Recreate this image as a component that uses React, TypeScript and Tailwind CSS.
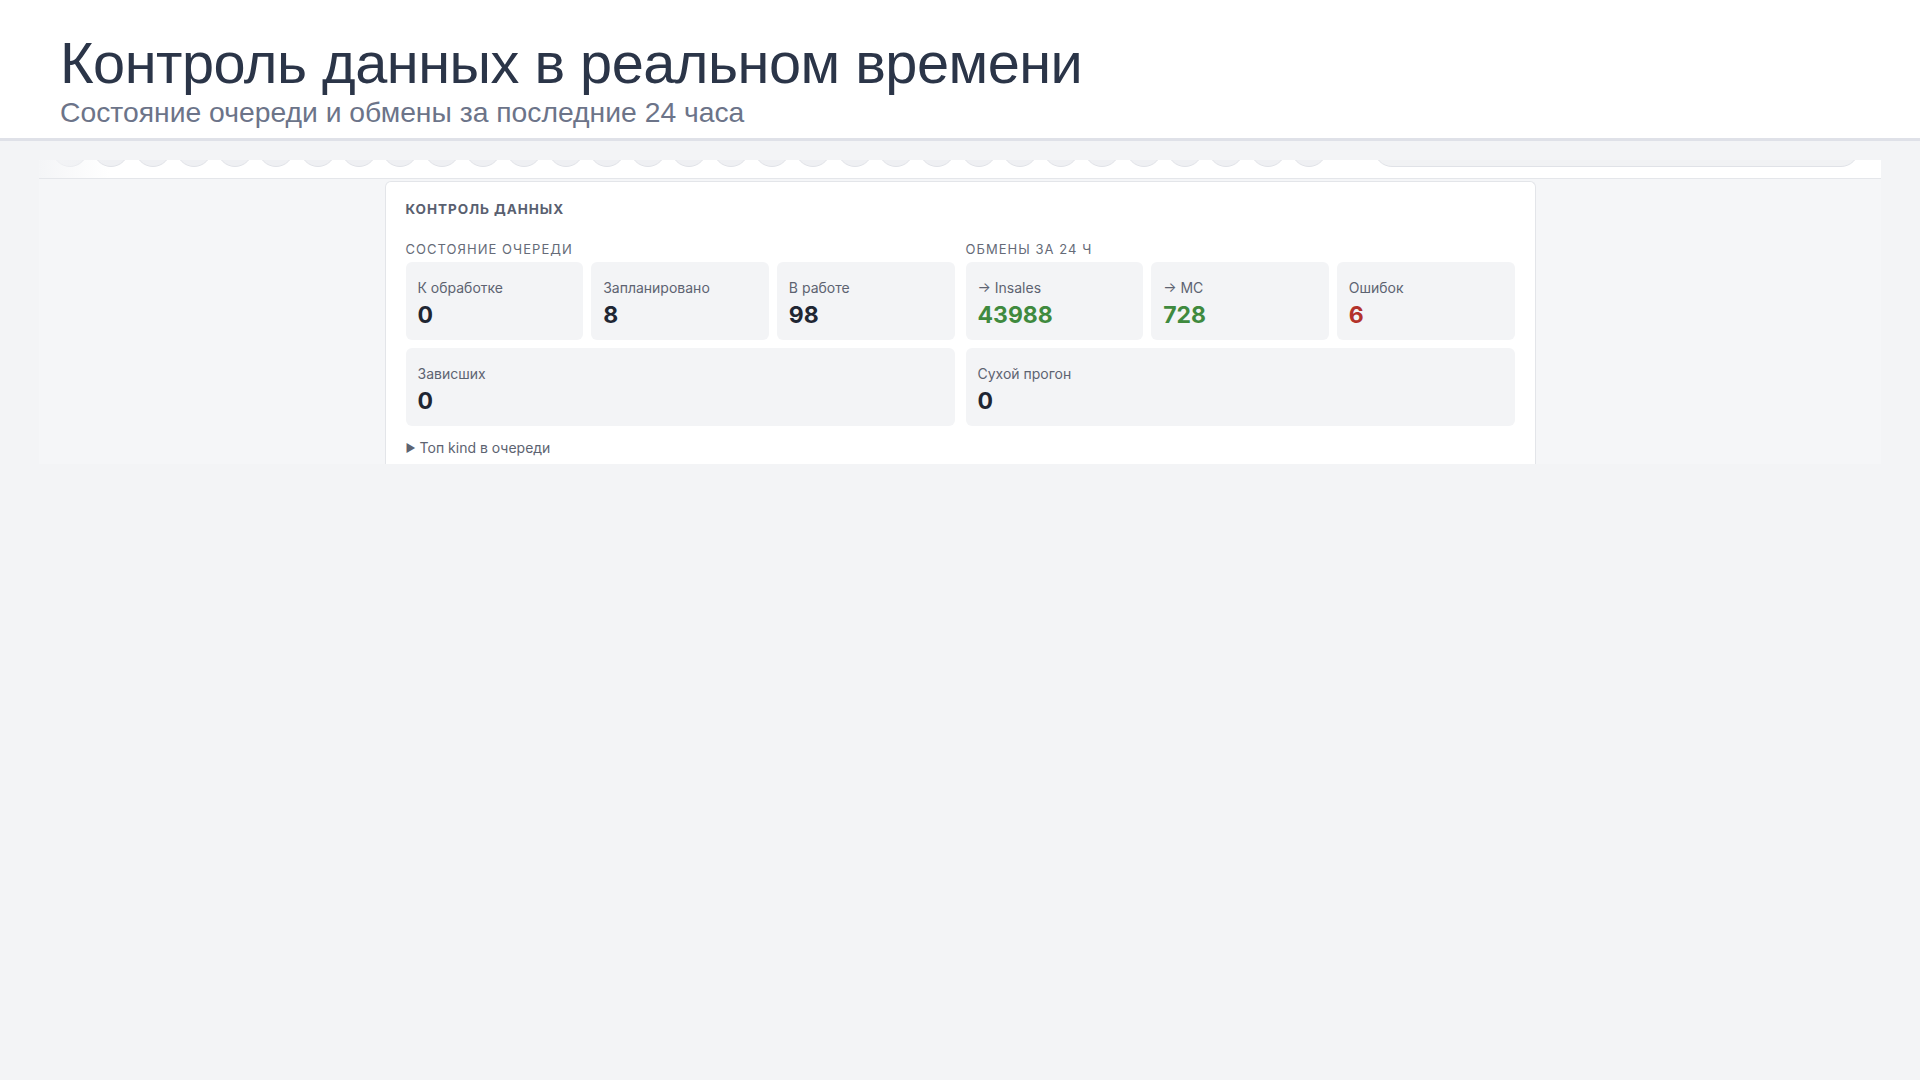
import React from 'react';

const queue = [
  { label: 'К обработке', value: '0' },
  { label: 'Запланировано', value: '8' },
  { label: 'В работе', value: '98' },
];

const exchanges = [
  { label: '→ Insales', value: '43988', tone: 'text-[#3f8a3e]' },
  { label: '→ МС', value: '728', tone: 'text-[#3f8a3e]' },
  { label: 'Ошибок', value: '6', tone: 'text-[#b3322b]' },
];

function Tile({ label, value, tone = 'text-[#1f2633]', wide = false }: { label: string; value: string; tone?: string; wide?: boolean }) {
  return (
    <div className={`rounded-md bg-[#f3f4f6] h-[78px] px-3 pt-4 ${wide ? 'col-span-3' : ''}`}>
      <div className="text-[14px] leading-5 text-[#5d6371]">{label}</div>
      <div className={`mt-0.5 text-[23px] leading-[30px] font-bold ${tone}`}>{value}</div>
    </div>
  );
}

function Section({ title, children }: { title: string; children: React.ReactNode }) {
  return (
    <div className="flex flex-col">
      <div className="text-[13px] leading-5 tracking-[0.08em] text-[#656b78] mb-[3px]">{title}</div>
      <div className="grid grid-cols-3 gap-2">{children}</div>
    </div>
  );
}

export default function App() {
  const dots = Array.from({ length: 31 });

  return (
    <div className="min-h-screen w-full bg-[#f3f4f6]" style={{ fontFamily: 'Inter, "Noto Sans", sans-serif' }}>
      {/* Slide header */}
      <header className="bg-white border-b-[3px] border-[#dfe1e8] h-[141px] px-[60px] pt-[31px]" style={{ fontFamily: '"Liberation Sans", Arial, sans-serif' }}>
        <h1 className="text-[57.7px] leading-[64px] text-[#2b3548] tracking-[-0.5px]">Контроль данных в реальном времени</h1>
        <p className="text-[28.3px] leading-[32px] text-[#6c7489] mt-[1px]">Состояние очереди и обмены за последние 24 часа</p>
      </header>

      {/* Embedded screenshot, cropped at the top */}
      <div className="mx-[39px] mt-[19px] bg-[#f5f6f8] h-[304px] overflow-hidden">
        <div className="relative h-[19px] bg-white border-b border-[#e4e6ea]">
          <div className="h-[7px] overflow-hidden flex items-end pl-[13px]">
            <div className="flex items-end gap-[5.3px]">
              {dots.map((_, i) => (
                <div key={i} className="shrink-0 w-9 h-9 rounded-full bg-[#eff0f3] border border-[#e0e2e7]" />
              ))}
            </div>
            <div className="shrink-0 ml-[47px] w-[485px] h-9 rounded-full bg-[#f1f2f4] border border-[#e0e2e7]" />
          </div>
          <div className="absolute left-0 top-0 h-full w-[70px] bg-gradient-to-r from-[#f4f5f7] to-transparent" />
        </div>

        <div className="flex justify-center pt-[2px]">
          <div className="w-[1151px] bg-white border border-b-0 border-[#e3e5e9] rounded-t-md px-5 pt-[17px] pb-4">
            <div className="text-[13.5px] leading-5 font-bold tracking-[0.07em] text-[#596070] uppercase">Контроль данных</div>
            <div className="grid grid-cols-2 gap-x-[11px] mt-5">
              <Section title="СОСТОЯНИЕ ОЧЕРЕДИ">
                {queue.map((q) => (
                  <Tile key={q.label} label={q.label} value={q.value} />
                ))}
              </Section>
              <Section title="ОБМЕНЫ ЗА 24 Ч">
                {exchanges.map((q) => (
                  <Tile key={q.label} label={q.label} value={q.value} tone={q.tone} />
                ))}
              </Section>
              <div className="grid grid-cols-3 gap-2 mt-2">
                <Tile label="Зависших" value="0" wide />
              </div>
              <div className="grid grid-cols-3 gap-2 mt-2">
                <Tile label="Сухой прогон" value="0" wide />
              </div>
            </div>
            <div className="mt-3 text-[14px] leading-5 text-[#5d6371] flex items-center gap-1">
              <span className="text-[11px]">▶</span>
              <span>Топ kind в очереди</span>
            </div>
          </div>
        </div>
      </div>
    </div>
  );
}
